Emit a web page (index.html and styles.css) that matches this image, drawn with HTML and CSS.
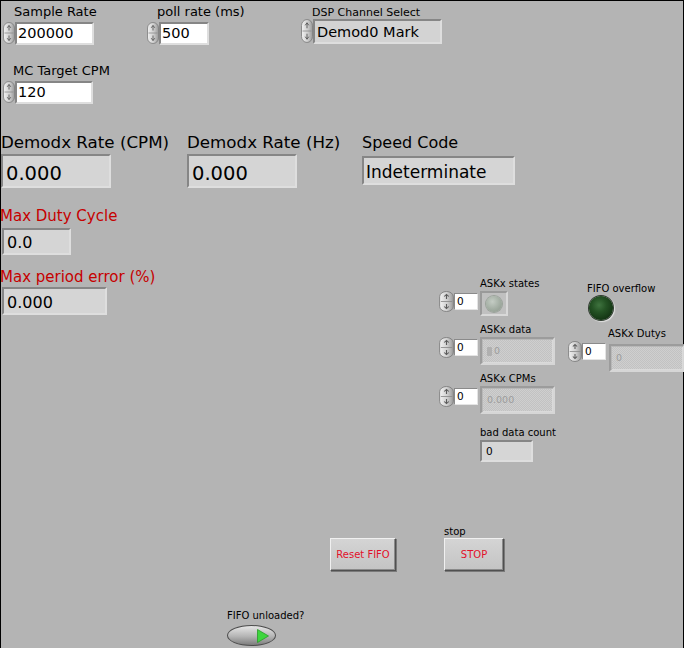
FILE: index.html
```html
<!DOCTYPE html>
<html>
<head>
<meta charset="utf-8">
<title>Front Panel</title>
<link rel="stylesheet" href="styles.css">
</head>
<body>
<svg class="defs" width="0" height="0" aria-hidden="true">
  <defs>
    <linearGradient id="sg" x1="0" y1="0" x2="1" y2="0">
      <stop offset="0" stop-color="#f2f2f2"/>
      <stop offset="0.55" stop-color="#cfcfcf"/>
      <stop offset="1" stop-color="#9a9a9a"/>
    </linearGradient>
    <symbol id="spin" viewBox="0 0 12 22" preserveAspectRatio="none">
      <rect x="0.5" y="0.5" width="11" height="21" rx="5.5" ry="5.5" fill="url(#sg)" stroke="#7c7c7c" stroke-width="0.8"/>
      <path d="M1.5 11 H10.5" stroke="#8c8c8c" stroke-width="0.8"/>
      <path d="M6 3.5 V8.5 M4.2 5.8 L6 3.5 L7.8 5.8" fill="none" stroke="#5a5a5a" stroke-width="0.9"/>
      <path d="M6 13.5 V18.5 M4.2 16.2 L6 18.5 L7.8 16.2" fill="none" stroke="#5a5a5a" stroke-width="0.9"/>
    </symbol>
  </defs>
</svg>

<div class="panel">
  <!-- top numeric controls -->
  <div class="ctrl top c-sample">
    <div class="lbl">Sample Rate</div>
    <div class="row"><svg class="spin"><use href="#spin"/></svg><div class="box white">200000</div></div>
  </div>
  <div class="ctrl top c-poll">
    <div class="lbl">poll rate (ms)</div>
    <div class="row"><svg class="spin"><use href="#spin"/></svg><div class="box white">500</div></div>
  </div>
  <div class="ctrl c-dsp">
    <div class="lbl">DSP Channel Select</div>
    <div class="row"><svg class="spin"><use href="#spin"/></svg><div class="box">Demod0 Mark</div></div>
  </div>
  <div class="ctrl top c-mc">
    <div class="lbl">MC Target CPM</div>
    <div class="row"><svg class="spin"><use href="#spin"/></svg><div class="box white">120</div></div>
  </div>

  <!-- large indicators -->
  <div class="ctrl big c-cpm">
    <div class="lbl">Demodx Rate (CPM)</div>
    <div class="box">0.000</div>
  </div>
  <div class="ctrl big c-hz">
    <div class="lbl">Demodx Rate (Hz)</div>
    <div class="box">0.000</div>
  </div>
  <div class="ctrl c-speed">
    <div class="lbl">Speed Code</div>
    <div class="box">Indeterminate</div>
  </div>
  <div class="ctrl red c-duty">
    <div class="lbl">Max Duty Cycle</div>
    <div class="box">0.0</div>
  </div>
  <div class="ctrl red c-perr">
    <div class="lbl">Max period error (%)</div>
    <div class="box">0.000</div>
  </div>

  <!-- arrays -->
  <div class="ctrl arr c-states">
    <div class="lbl">ASKx states</div>
    <div class="row">
      <svg class="spin"><use href="#spin"/></svg>
      <div class="idx">0</div>
      <div class="ledframe"><div class="dimled"></div></div>
    </div>
  </div>
  <div class="ctrl arr c-data">
    <div class="lbl">ASKx data</div>
    <div class="row">
      <svg class="spin"><use href="#spin"/></svg>
      <div class="idx">0</div>
      <div class="dis"><span class="mark"></span>0</div>
    </div>
  </div>
  <div class="ctrl arr c-cpms">
    <div class="lbl">ASKx CPMs</div>
    <div class="row">
      <svg class="spin"><use href="#spin"/></svg>
      <div class="idx">0</div>
      <div class="dis">0.000</div>
    </div>
  </div>
  <div class="ctrl arr c-dutys">
    <div class="lbl">ASKx Dutys</div>
    <div class="row">
      <svg class="spin"><use href="#spin"/></svg>
      <div class="idx">0</div>
      <div class="dis">0</div>
    </div>
  </div>
  <div class="ctrl c-bad">
    <div class="lbl">bad data count</div>
    <div class="box">0</div>
  </div>

  <div class="ctrl c-ovf">
    <div class="lbl">FIFO overflow</div>
    <div class="led"></div>
  </div>

  <!-- buttons -->
  <div class="ctrl c-reset">
    <div class="btn">Reset FIFO</div>
  </div>
  <div class="ctrl c-stop">
    <div class="lbl">stop</div>
    <div class="btn">STOP</div>
  </div>

  <div class="ctrl c-unl">
    <div class="lbl">FIFO unloaded?</div>
    <div class="oval">
      <svg class="tri" viewBox="0 0 12 14" width="12" height="14"><polygon points="0.5,0.5 11.5,7 0.5,13.5" fill="#3ed63e" stroke="#2a9a2a" stroke-width="0.8"/></svg>
    </div>
  </div>
</div>
</body>
</html>
```

FILE: styles.css
```css
* { box-sizing: border-box; margin: 0; padding: 0; }
html, body { width: 684px; height: 648px; overflow: hidden; }
body { background: #b4b4b4; font-family: "DejaVu Sans", sans-serif; color: #000; }

.defs { position: absolute; width: 0; height: 0; overflow: hidden; }

.panel {
  position: relative;
  width: 684px;
  height: 648px;
  background: #b4b4b4;
  box-shadow: inset 1px 1px 0 #000, inset -1px 0 0 #000;
  overflow: hidden;
}

.ctrl { position: absolute; }
.lbl { white-space: nowrap; }
.row { display: flex; align-items: flex-start; }
.spin { display: block; flex: none; }

.box {
  border: 2px solid;
  border-color: #868686 #dedede #dedede #868686;
  background: #d5d5d5;
  white-space: nowrap;
  overflow: hidden;
}
.white { background: #fff; }

/* top numeric controls */
.top .lbl { font-size: 13px; height: 20px; line-height: 20px; padding-left: 11px; }
.top .spin { width: 12px; height: 22px; }
.top .box { height: 23px; font-size: 14.5px; line-height: 19px; padding-left: 1px; }
.c-sample { left: 3px; top: 2px; }
.c-sample .box { width: 79px; }
.c-poll { left: 147px; top: 2px; }
.c-poll .lbl { padding-left: 10px; }
.c-poll .box { width: 50px; }
.c-mc { left: 3px; top: 61px; }
.c-mc .lbl { padding-left: 10px; }
.c-mc .box { width: 78px; }

.c-dsp { left: 301px; top: 7px; }
.c-dsp .lbl { font-size: 11px; height: 12px; line-height: 12px; padding-left: 11px; }
.c-dsp .spin { width: 12px; height: 24px; }
.c-dsp .box { width: 129px; height: 25px; font-size: 14.5px; line-height: 20px; padding: 1px 0 0 2px; background: #d3d3d3; }

/* big indicators */
.big .lbl { font-size: 16.7px; height: 23px; line-height: 23px; }
.big .box { width: 110px; height: 34px; font-size: 19.5px; line-height: 24px; padding: 6px 0 0 3px; }
.c-cpm { left: 1px; top: 131px; }
.c-hz { left: 187px; top: 131px; }

.c-speed { left: 362px; top: 129px; }
.c-speed .lbl { font-size: 16px; height: 27px; line-height: 27px; }
.c-speed .box { width: 153px; height: 29px; font-size: 17px; line-height: 22px; padding: 3px 0 0 2px; }

.red .lbl { color: #c60000; font-size: 15px; }
.c-duty { left: 0; top: 204px; }
.c-duty .lbl { height: 24px; line-height: 24px; }
.c-duty .box { margin-left: 2px; width: 69px; height: 27px; font-size: 16px; line-height: 20px; padding: 3px 0 0 3px; }
.c-perr { left: 0; top: 267px; }
.c-perr .lbl { height: 20px; line-height: 20px; }
.c-perr .box { margin-left: 2px; width: 105px; height: 28px; font-size: 16px; line-height: 20px; padding: 4px 0 0 3px; }

/* arrays */
.arr .lbl { font-size: 10px; height: 15px; line-height: 15px; padding-left: 41px; }
.arr .spin { width: 15px; height: 21px; }
.idx {
  width: 24px; height: 17px; margin-top: 2px;
  background: #fff;
  border: 1px solid; border-color: #8a8a8a #e4e4e4 #e4e4e4 #8a8a8a;
  font-size: 10.5px; line-height: 14px; padding-left: 2px;
}
.c-states { left: 439px; top: 276px; }
.c-data { left: 439px; top: 322px; }
.c-cpms { left: 439px; top: 371px; }
.c-dutys { left: 568px; top: 326px; }
.c-dutys .lbl { padding-left: 40px; }
.c-dutys .spin { width: 14px; }

.ledframe {
  margin-left: 2px;
  width: 28px; height: 25px;
  border: 2px solid; border-color: #9a9a9a #d8d8d8 #d8d8d8 #9a9a9a;
  background: #c0c0c0;
  display: flex; align-items: center; justify-content: center;
}
.dimled {
  width: 16px; height: 16px; border-radius: 50%;
  background: radial-gradient(circle at 40% 35%, #c4ccc4 0, #a2ada2 55%, #8a958a 100%);
  box-shadow: 0 0 0 1px #9aa29a;
}

.dis {
  margin-left: 2px;
  flex: none;
  width: 75px; height: 28px;
  border: 2px solid; border-color: #9c9c9c #d6d6d6 #d6d6d6 #9c9c9c;
  background-color: #c8c8c8;
  background-image: repeating-conic-gradient(#c2c2c2 0 25%, #cfcfcf 0 50%);
  background-size: 2px 2px;
  box-shadow: inset 1px 1px 0 #b8b8b8, inset -1px -1px 0 #dadada;
  color: #9c9c9c;
  font-size: 9.5px; line-height: 24px; padding-left: 5px;
  display: flex; align-items: center;
}
.mark {
  display: inline-block; width: 5px; height: 9px; margin-right: 2px;
  background: #b0b0b0; border-radius: 1px;
}
.c-dutys .dis { margin-left: 3px; margin-top: 3px; width: 76px; }

.c-bad { left: 480px; top: 425px; }
.c-bad .lbl { font-size: 10px; height: 15px; line-height: 15px; }
.c-bad .box { width: 53px; height: 22px; font-size: 10.5px; line-height: 18px; padding-left: 4px; background: #d6d6d6; }

.c-ovf { left: 587px; top: 283px; }
.c-ovf .lbl { font-size: 10px; height: 12px; line-height: 12px; }
.led {
  margin: 1px 0 0 2px;
  width: 24px; height: 24px; border-radius: 50%;
  background: radial-gradient(circle at 42% 38%, #3f733f 0, #245224 35%, #113011 80%);
  box-shadow: 0 0 0 1px #2e3a2e, 1px 1px 1px 1px #e2e2e2;
}

/* buttons */
.btn {
  height: 33px;
  background: linear-gradient(#d4d4d4, #c4c4c4);
  border: 1px solid; border-color: #f0f0f0 #505050 #505050 #f0f0f0;
  box-shadow: inset -1px -1px 0 #8a8a8a, 1px 1px 0 #7a7a7a;
  color: #e2102a;
  font-size: 10px;
  display: flex; align-items: center; justify-content: center;
}
.c-reset { left: 330px; top: 538px; }
.c-reset .btn { width: 66px; }
.c-stop { left: 444px; top: 526px; }
.c-stop .lbl { font-size: 10px; height: 12px; line-height: 12px; }
.c-stop .btn { width: 60px; }

.c-unl { left: 227px; top: 610px; }
.c-unl .lbl { font-size: 10px; height: 12px; line-height: 12px; margin-bottom: 3px; }
.oval {
  width: 49px; height: 21px; border-radius: 50%;
  background: linear-gradient(#e6e6e6, #b4b4b4 55%, #7c7c7c);
  border: 1px solid #4c4c4c;
  display: flex; align-items: center; justify-content: flex-end;
  padding-right: 6px;
}
.tri { display: block; }
```
